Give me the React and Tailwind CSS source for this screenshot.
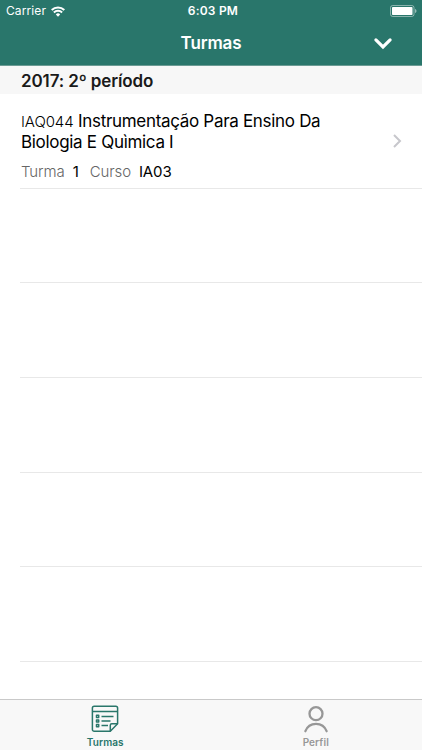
import React from 'react';

const WifiIcon = () => (
  <svg width="14" height="11" viewBox="0 0 14 11" fill="none" stroke="white" strokeWidth="2">
    <path d="M0.7 4a9 9 0 0 1 12.6 0" />
    <path d="M2.9 6.5a5.8 5.8 0 0 1 8.2 0" />
    <path d="M7 10.7L4.8 8.4a3.1 3.1 0 0 1 4.4 0z" fill="white" stroke="none" />
  </svg>
);

const BatteryIcon = () => (
  <svg width="27" height="12" viewBox="0 0 27 12" fill="none">
    <rect x="0.5" y="0.5" width="23.5" height="11" rx="2.2" stroke="white" strokeOpacity="0.45" />
    <rect x="2" y="2" width="20.5" height="8" rx="0.8" fill="white" />
    <path d="M25 4v4c0.9-0.3 1.5-1.1 1.5-2s-0.6-1.7-1.5-2z" fill="white" fillOpacity="0.5" />
  </svg>
);

const NotesIcon = () => (
  <svg width="28" height="28" viewBox="0 0 28 28" fill="none" stroke="#29766a" strokeWidth="1.5" strokeLinejoin="round">
    <path d="M19.3 26.2H3.2a1.8 1.8 0 0 1-1.8-1.8V3a1.8 1.8 0 0 1 1.8-1.8h21.6A1.8 1.8 0 0 1 26.6 3v15.8z" />
    <path d="M1.4 6.6h25.2M19.3 26.2v-5.9a1.5 1.5 0 0 1 1.5-1.5h5.8" />
    <path d="M10.5 11.4h12M10.5 16h9M10.5 20.6h6.5" />
    <path d="M5.5 10.3h2.2v2.2H5.5zM5.5 14.9h2.2v2.2H5.5zM5.5 19.5h2.2v2.2H5.5z" />
  </svg>
);

const ProfileIcon = () => (
  <svg width="24" height="27" viewBox="0 0 24 27" fill="none" stroke="#979797" strokeWidth="2.3" strokeLinecap="round">
    <circle cx="12" cy="7.7" r="6.5" />
    <path d="M1.4 25.2C3.1 20.6 7.2 17.8 12 17.8s8.9 2.8 10.6 7.4" />
  </svg>
);

const Header = () => (
  <header className="h-[66px] border-b border-[#6b9b94] bg-[#29766b] text-white">
    <div className="grid h-[22px] grid-cols-3 items-center pl-[6px] pr-[5px]">
      <div className="flex items-center gap-[5px] text-[12px] leading-[22px] tracking-[0.1px]">
        <span>Carrier</span>
        <WifiIcon />
      </div>
      <div className="pl-[3px] text-center text-[12px] font-semibold leading-[22px] tracking-[0.2px]">6:03 PM</div>
      <div className="flex justify-end">
        <BatteryIcon />
      </div>
    </div>
    <div className="grid h-[43px] grid-cols-3 items-center">
      <h1 className="col-start-2 text-center text-[17px] font-semibold leading-[43px] tracking-[-0.15px]">Turmas</h1>
      <div className="flex justify-end pr-[29px]">
        <svg width="20" height="14" viewBox="0 0 20 14" fill="none" stroke="white" strokeWidth="3.2" strokeLinecap="round">
          <path d="M2.9 2.9l7.1 7 7.1-7" />
        </svg>
      </div>
    </div>
  </header>
);

const ClassRow = () => (
  <li className="ml-5 flex h-[94.7px] items-center border-b border-[#e8e8e8] pl-px pr-5">
    <div className="flex-1 pt-[11px] text-black">
      <p className="text-[17px] leading-[20px] tracking-[-0.31px]">
        <span className="text-[15px] font-light tracking-[-0.1px]">IAQ044</span> Instrumentação Para Ensino Da
        <br />
        Biologia E Quìmica I
      </p>
      <p className="flex pt-[10px] text-[15px] leading-5 tracking-[-0.1px]">
        <span className="font-light text-[#666]">Turma</span>
        <span className="ml-2">1</span>
        <span className="ml-[11px] font-light text-[#666]">Curso</span>
        <span className="ml-2">IA03</span>
      </p>
    </div>
    <svg width="9" height="14" viewBox="0 0 9 14" fill="none" stroke="#c7c7cc" strokeWidth="2">
      <path d="M1 1l6 6-6 6" />
    </svg>
  </li>
);

const TabBar = () => (
  <nav className="grid h-[51px] grid-cols-2 border-t border-[#c9c9c9] bg-[#f8f8f8] pr-px text-[10px]">
    <div className="flex flex-col items-center pt-[5px] text-[#29766b]">
      <NotesIcon />
      <span className="mt-[3px] font-semibold leading-3 tracking-[0.1px]">Turmas</span>
    </div>
    <div className="flex flex-col items-center pt-[6px] text-[#979797]">
      <ProfileIcon />
      <span className="mt-[3px] font-semibold leading-3 tracking-[0.1px]">Perfil</span>
    </div>
  </nav>
);

const App = () => {
  return (
    <div className="flex h-[750px] w-[422px] flex-col overflow-hidden bg-white font-['Inter',sans-serif]">
      <Header />
      <h2 className="h-7 shrink-0 bg-[#f7f7f7] pl-[21px] text-[17px] font-semibold leading-[30px] tracking-[-0.12px] text-[#1a1a1a]">
        2017: 2º período
      </h2>
      <ul className="min-h-0 flex-1 overflow-hidden">
        <ClassRow />
        {[1, 2, 3, 4, 5].map((row) => (
          <li key={row} className="ml-5 h-[94.7px] border-b border-[#e8e8e8]" />
        ))}
      </ul>
      <TabBar />
    </div>
  );
};

export default App;
